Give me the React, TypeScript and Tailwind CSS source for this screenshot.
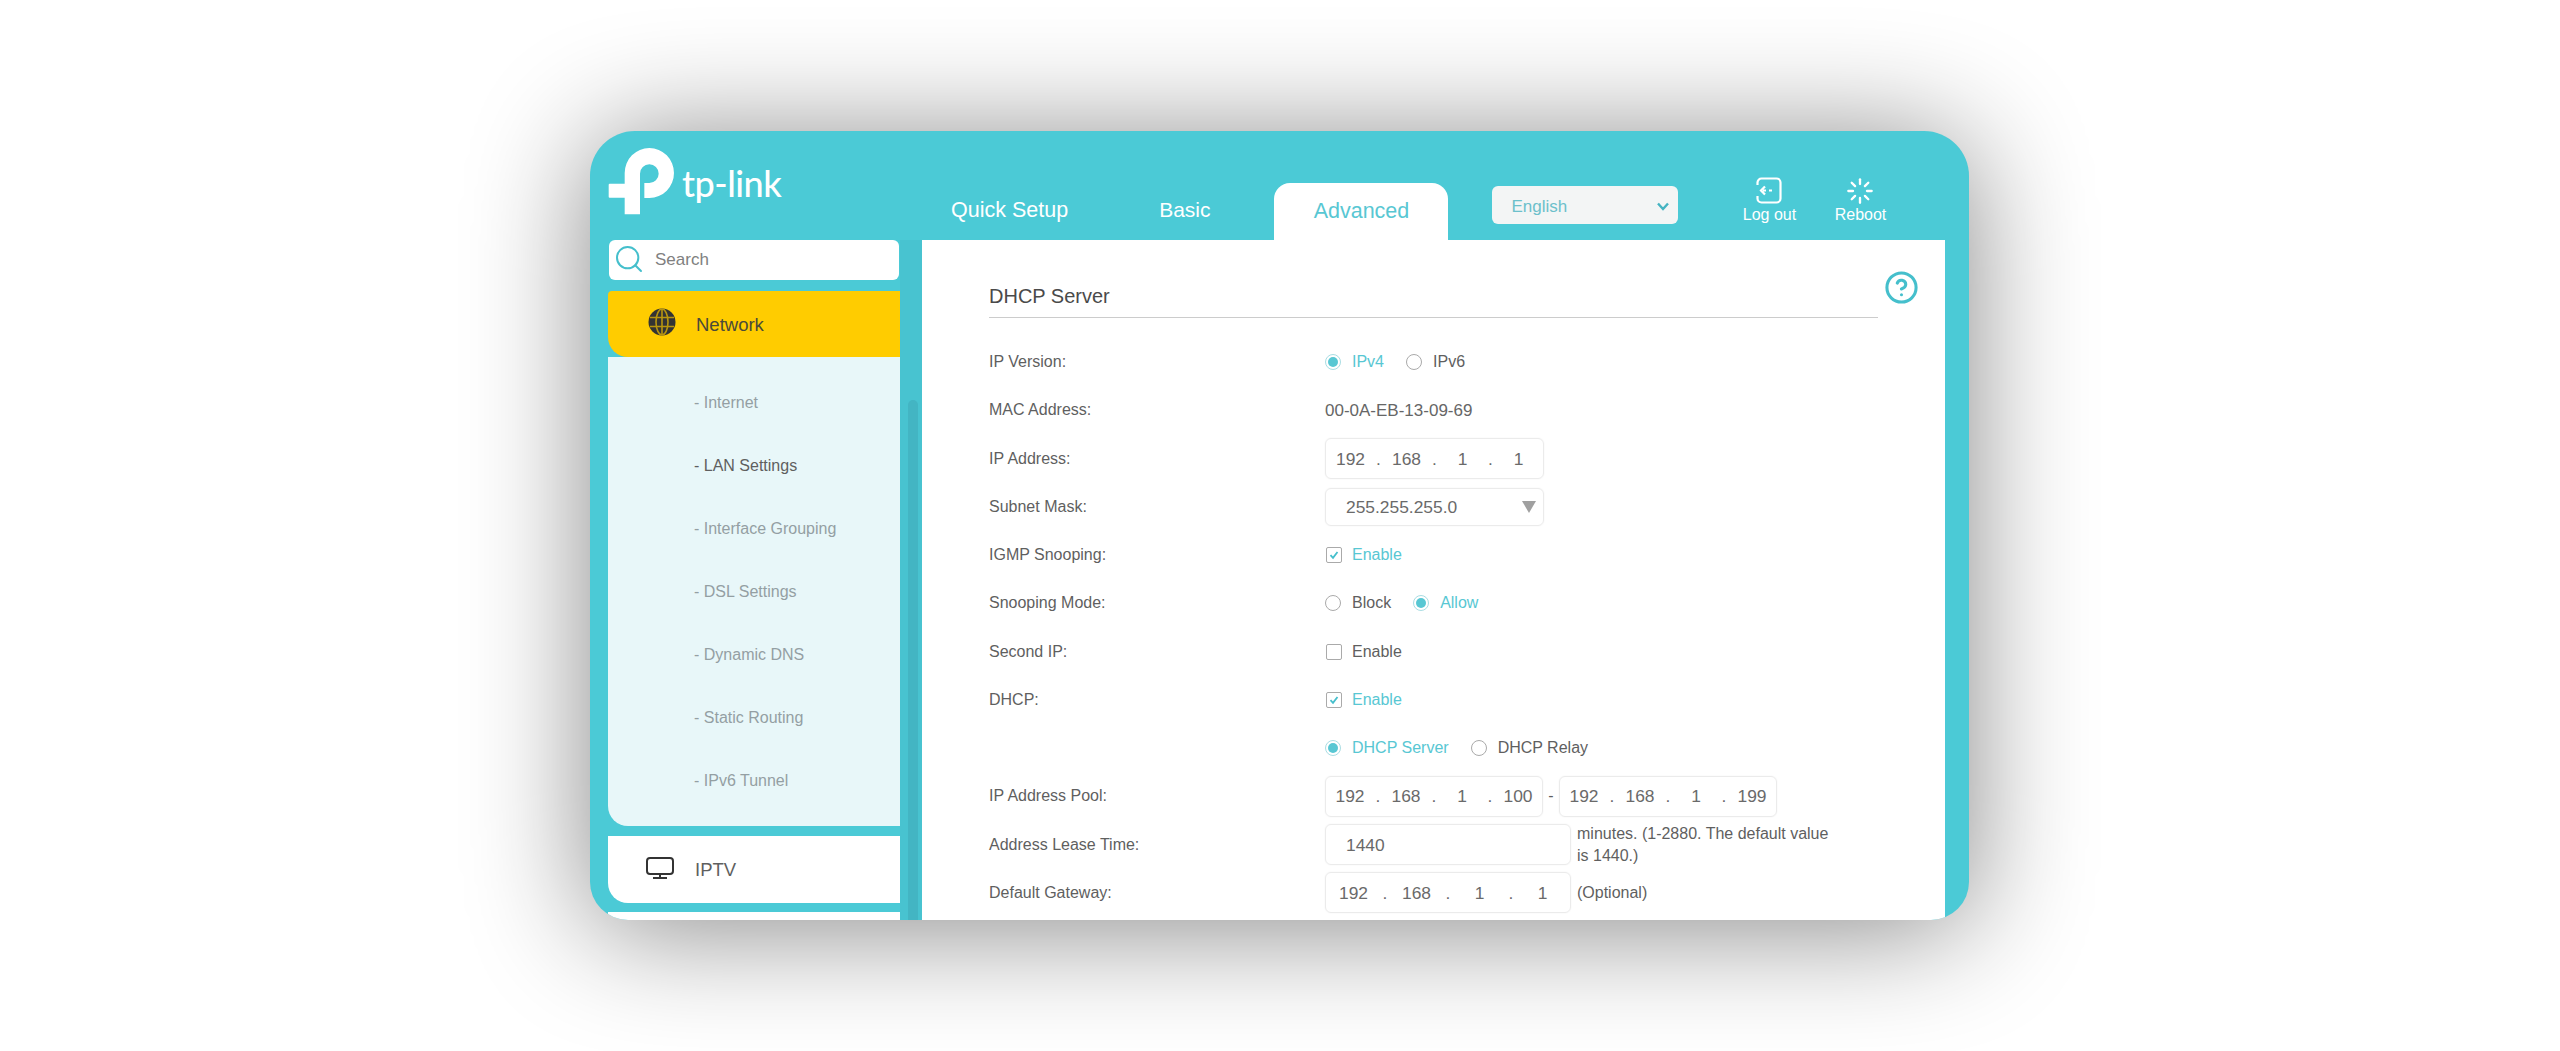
import { CircleHelp, Loader, Search } from "lucide-react";

const teal = "text-[#58c7d3]";

const Radio = ({ on, label }: { on?: boolean; label: string }) => (
    <div className="flex items-center">
        <span
            className={`flex h-4 w-4 items-center justify-center rounded-full border ${
                on ? "border-[#a9dde3]" : "border-[#aaaaaa]"
            }`}
        >
            {on && <span className="h-2.5 w-2.5 rounded-full bg-[#58c7d3]" />}
        </span>
        <span className={`ml-[11px] ${on ? teal : "text-[#5f5f5f]"}`}>{label}</span>
    </div>
);

const Checkbox = ({ on, label }: { on?: boolean; label: string }) => (
    <div className="flex items-center">
        <span className="ml-[1px] flex h-4 w-4 items-center justify-center rounded-[2px] border border-[#aaaaaa]">
            {on && (
                <svg width="10" height="10" viewBox="0 0 10 10" fill="none">
                    <path d="M1.5 5.2 4 7.8 8.5 2" stroke="#45bfcc" strokeWidth="1.8" />
                </svg>
            )}
        </span>
        <span className={`ml-[10px] ${on ? teal : "text-[#5f5f5f]"}`}>{label}</span>
    </div>
);

const IpBox = ({
    parts,
    className,
    cell,
}: {
    parts: string[];
    className: string;
    cell: string;
}) => (
    <div
        className={`flex h-[41px] items-center justify-center rounded-[6px] border border-[#ebebeb] text-[17.4px] text-[#6a6a6a] shadow-[0_0_2px_rgba(0,0,0,0.06)] ${className}`}
    >
        {parts.map((part, i) => (
            <div key={i} className="flex items-center">
                <span className={`text-center ${cell}`}>{part}</span>
                {i < 3 && <span className="w-2 text-center">.</span>}
            </div>
        ))}
    </div>
);

const Row = ({ label, children }: { label?: string; children: React.ReactNode }) => (
    <div className="flex h-[48.25px] items-center">
        <div className="w-[336px] shrink-0 text-[#5f5f5f]">{label}</div>
        {children}
    </div>
);

const subItems = [
    "- Internet",
    "- LAN Settings",
    "- Interface Grouping",
    "- DSL Settings",
    "- Dynamic DNS",
    "- Static Routing",
    "- IPv6 Tunnel",
];

const Logo = () => (
    <div className="flex items-start pl-[17px] pt-[16px]">
        <svg width="70" height="68.3" viewBox="110 110 210 205" fill="#ffffff">
            <path d="M163 312V188A74 75 0 1 1 237 263H222V218H237A28 28 0 1 0 209 190V312Z" />
            <rect x="115" y="220" width="60" height="42" rx="3" />
        </svg>
        <span className="ml-[5px] mt-[14px] font-['Lato'] text-[36px] font-medium leading-[44px] tracking-[-0.5px] text-white">
            tp-link
        </span>
    </div>
);

const Sidebar = () => (
    <div className="flex w-[332px] shrink-0">
        <div className="ml-[18px] w-[292px] shrink-0">
            <div className="mx-px flex h-10 items-center rounded-[6px] bg-white">
                <Search size={32} strokeWidth={1.5} className="ml-[4px] mt-[-2px] text-[#45bfcc]" />
                <span className="ml-[10px] text-[17px] text-[#808080]">Search</span>
            </div>
            <div className="mt-[11px] flex h-[66px] items-center rounded-bl-[20px] rounded-tl-[4px] bg-[#ffcc00]">
                <svg width="28" height="28" viewBox="0 0 28 28" className="ml-[40px] mt-[-4px]">
                    <circle cx="14" cy="14" r="13.5" fill="#333333" />
                    <g fill="none" stroke="#b8950f" strokeWidth="1.6">
                        <ellipse cx="14" cy="14" rx="6" ry="13" />
                        <path d="M14 1v26M2 9.5h24M2 18.5h24" />
                    </g>
                </svg>
                <span className="ml-[20px] mt-[1px] text-[18.5px] text-[#4a4a3a]">Network</span>
            </div>
            <div className="flex h-[469px] flex-col rounded-bl-[20px] bg-[#e8f7f9] pt-[14.5px]">
                {subItems.map((item) => (
                    <div
                        key={item}
                        className={`flex h-[63px] shrink-0 items-center pl-[86px] ${
                            item === "- LAN Settings" ? "text-[#5f5f5f]" : "text-[#949fa3]"
                        }`}
                    >
                        {item}
                    </div>
                ))}
            </div>
            <div className="mt-[10px] flex h-[67px] items-center rounded-bl-[20px] bg-white">
                <svg width="28" height="22" viewBox="0 0 28 22" fill="none" className="ml-[38px] mt-[-3px]" stroke="#333333" strokeWidth="2">
                    <rect x="1" y="1" width="26" height="16" rx="3" />
                    <path d="M14 17v4M7 21h14" />
                </svg>
                <span className="ml-[21px] mt-[1px] text-[18.5px] text-[#5f5f5f]">IPTV</span>
            </div>
            <div className="mt-[9px] h-[30px] bg-white" />
        </div>
        <div className="w-[22px] shrink-0 bg-[#48c3d0] pl-2 pt-[160px]">
            <div className="h-[600px] w-2.5 rounded-t-[5px] bg-[#43b5c3]" />
        </div>
    </div>
);

const Form = () => (
    <div className="min-w-0 flex-1 overflow-hidden bg-white pl-[67px] text-[16px]">
        <div className="flex items-start">
            <div className="mt-[44px] w-[889px] border-b-[1.5px] border-[#cccccc] pb-[9px] text-[20px] leading-6 text-[#4a4a4a]">
                DHCP Server
            </div>
            <CircleHelp size={35} strokeWidth={2.1} className="ml-[6px] mt-[30px] text-[#45bfcc]" />
        </div>
        <div className="mt-[20px]">
            <Row label="IP Version:">
                <Radio on label="IPv4" />
                <div className="ml-[22px]">
                    <Radio label="IPv6" />
                </div>
            </Row>
            <Row label="MAC Address:">
                <span className="text-[17px] text-[#666666]">00-0A-EB-13-09-69</span>
            </Row>
            <Row label="IP Address:">
                <IpBox parts={["192", "168", "1", "1"]} className="w-[219px]" cell="w-12" />
            </Row>
            <Row label="Subnet Mask:">
                <div className="flex h-[38px] w-[219px] items-center justify-between rounded-[6px] border border-[#ebebeb] pl-5 pr-[7px] text-[17.4px] text-[#6a6a6a] shadow-[0_0_2px_rgba(0,0,0,0.06)]">
                    255.255.255.0
                    <svg width="14" height="12" viewBox="0 0 14 12" fill="#a0a0a0">
                        <path d="M0 0h14L7 12Z" />
                    </svg>
                </div>
            </Row>
            <Row label="IGMP Snooping:">
                <Checkbox on label="Enable" />
            </Row>
            <Row label="Snooping Mode:">
                <Radio label="Block" />
                <div className="ml-[22px]">
                    <Radio on label="Allow" />
                </div>
            </Row>
            <Row label="Second IP:">
                <Checkbox label="Enable" />
            </Row>
            <Row label="DHCP:">
                <Checkbox on label="Enable" />
            </Row>
            <Row>
                <Radio on label="DHCP Server" />
                <div className="ml-[22px]">
                    <Radio label="DHCP Relay" />
                </div>
            </Row>
            <Row label="IP Address Pool:">
                <IpBox parts={["192", "168", "1", "100"]} className="w-[218px]" cell="w-12" />
                <span className="w-4 text-center text-[#5f5f5f]">-</span>
                <IpBox parts={["192", "168", "1", "199"]} className="w-[218px]" cell="w-12" />
            </Row>
            <Row label="Address Lease Time:">
                <div className="flex h-[41px] w-[246px] items-center rounded-[6px] border border-[#ebebeb] pl-5 text-[17.4px] text-[#6a6a6a] shadow-[0_0_2px_rgba(0,0,0,0.06)]">
                    1440
                </div>
                <div className="ml-[6px] w-[258px] leading-[22px] text-[#5f5f5f]">
                    minutes. (1-2880. The default value is 1440.)
                </div>
            </Row>
            <Row label="Default Gateway:">
                <IpBox parts={["192", "168", "1", "1"]} className="w-[246px]" cell="w-[55px]" />
                <span className="ml-[6px] text-[#5f5f5f]">(Optional)</span>
            </Row>
        </div>
    </div>
);

export default function App() {
    return (
        <div className="h-[1051px] w-full overflow-hidden bg-white pl-[590px] pt-[131px] font-['Liberation_Sans',Arial,sans-serif]">
            <div className="flex h-[789px] w-[1379px] flex-col overflow-hidden rounded-b-[38px] rounded-t-[45px] bg-[#4bcad6] shadow-[0_8px_120px_rgba(0,0,0,0.48)]">
                <div className="flex h-[109px] shrink-0">
                    <div className="w-[332px] shrink-0">
                        <Logo />
                    </div>
                    <div className="flex items-end text-white">
                        <div className="ml-[29px] flex h-[60px] items-center text-[21.5px]">Quick Setup</div>
                        <div className="ml-[91px] flex h-[60px] items-center text-[21px]">Basic</div>
                        <div className="ml-[64px] flex h-[57px] w-[174px] items-center justify-center rounded-t-[16px] bg-white text-[21.5px] text-[#58c7d3]">
                            Advanced
                        </div>
                        <div className="mb-[16px] ml-[44px] flex h-[38px] w-[186px] items-center justify-between rounded-[6px] bg-[#f3f5f5] pl-[19px] pr-[9px] pt-[3px] text-[17px] text-[#6cc0cb]">
                            English
                            <svg width="12" height="9" viewBox="0 0 12 9" fill="none" stroke="#45b4c2" strokeWidth="2.4">
                                <path d="M1 1.5 6 7l5-5.5" />
                            </svg>
                        </div>
                        <div className="mb-[15px] ml-[61px] flex w-[60px] flex-col items-center">
                            <svg width="26" height="27" viewBox="0 0 26 27" fill="none" stroke="#ffffff" strokeWidth="2.2">
                                <path d="M1.5 8V5.5a4 4 0 0 1 4-4h15a4 4 0 0 1 4 4v16a4 4 0 0 1-4 4h-15a4 4 0 0 1-4-4V19" />
                                <path d="M9 9.5 5 13.5l4 4M7 13.5h3M13 13.5h3" />
                            </svg>
                            <span className="mt-[1px] text-[16px] leading-5">Log out</span>
                        </div>
                        <div className="mb-[15px] ml-[31px] flex w-[60px] flex-col items-center">
                            <Loader size={28} strokeWidth={2} />
                            <span className="text-[16px] leading-5">Reboot</span>
                        </div>
                    </div>
                </div>
                <div className="flex min-h-0 flex-1 overflow-hidden">
                    <Sidebar />
                    <Form />
                    <div className="w-[24px] shrink-0" />
                </div>
            </div>
        </div>
    );
}
